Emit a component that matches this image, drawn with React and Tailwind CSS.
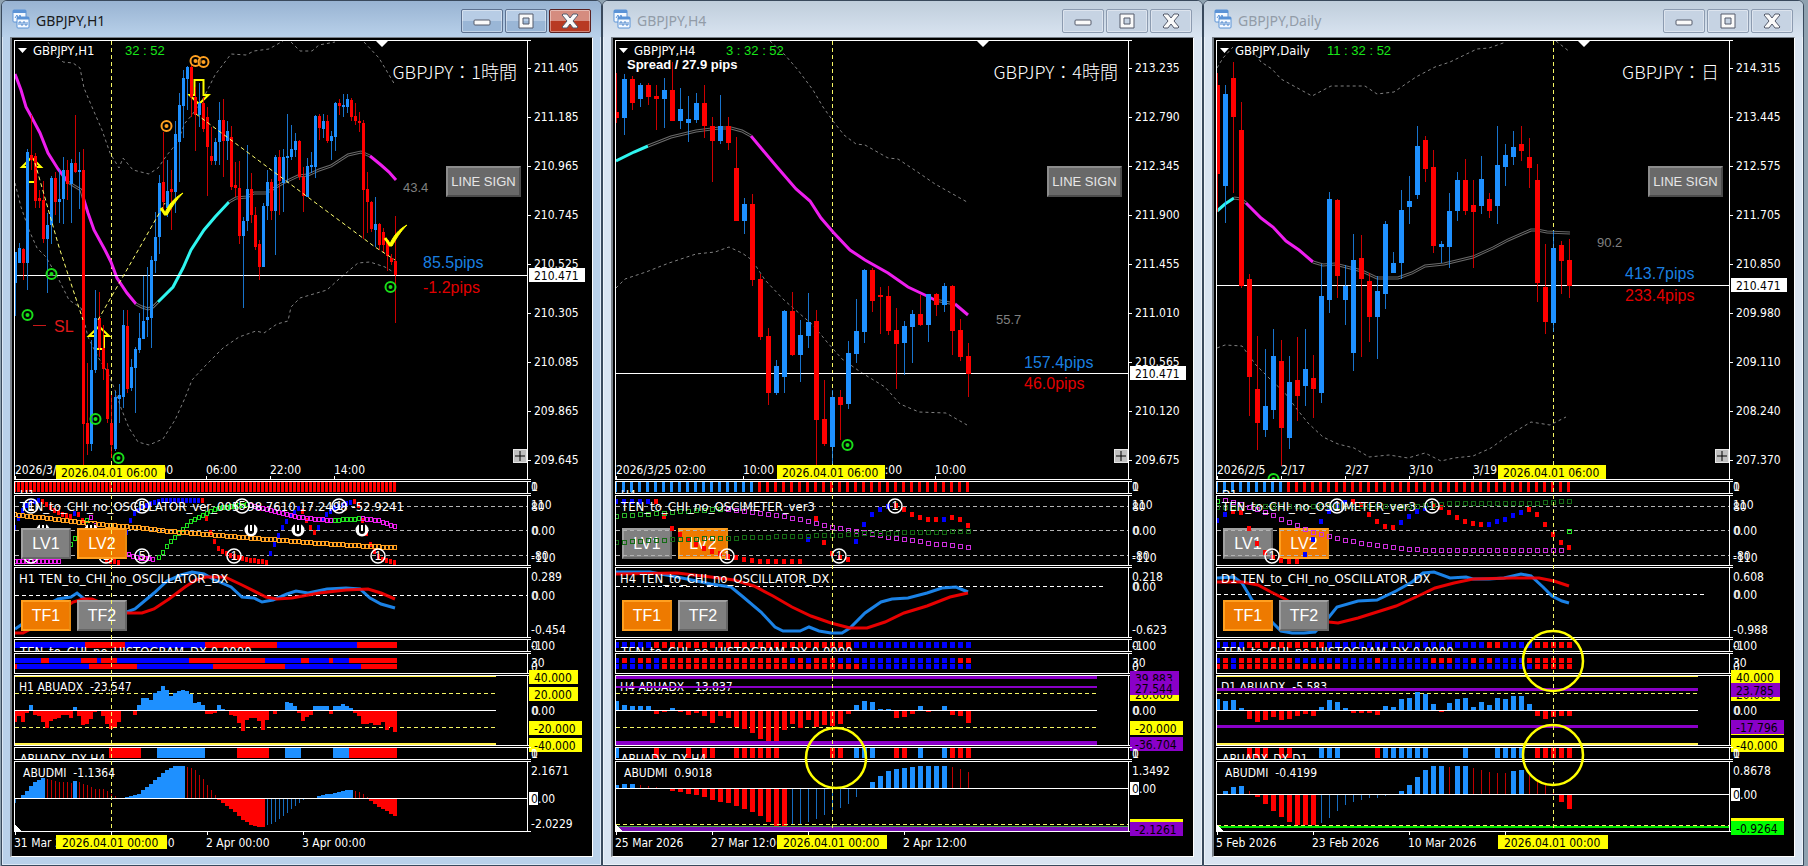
import React from 'react';
import { clsx } from 'clsx';

const BLUE = '#1e90ff';
const RED = '#ff0000';
const PURE_BLUE = '#0000ff';
const MAGENTA = '#ee1eee';
const CYAN = '#2ff5f0';
const GRAY = '#696969';
const PURPLE = '#8a00c8';
const YELLOW = '#ffff00';
const DASH_YELLOW = '#f5f564';

const SANS = 'font-["DejaVu_Sans_Condensed","Noto_Sans",sans-serif]';
const ARIAL = 'font-["Liberation_Sans",sans-serif]';

// body top, body bottom, high, low, direction
const CANDLES_H1 = `252,283,252,316,b 248,263,243,263,b 249,263,248,280,r 152,263,149,290,b 155,160,115,170,r 156,201,153,208,r 198,201,190,208,r 200,239,181,243,r
225,239,213,293,b 178,225,176,244,b 178,202,172,215,r 199,202,169,223,b 170,199,157,224,b 170,184,160,200,r 163,184,159,223,b 163,172,115,173,r
170,172,152,209,b 170,424,149,467,r 423,444,363,455,r 370,444,340,451,b 318,370,290,373,b 318,348,292,357,r 348,369,325,380,r 369,419,363,423,r
423,445,395,458,r 397,449,391,451,b 395,399,384,423,b 325,397,310,408,b 326,389,310,393,r 367,388,359,391,b 349,368,347,413,b 338,350,313,353,b
321,339,276,339,b 317,320,267,337,b 260,318,256,348,b 237,261,212,273,b 183,237,175,254,b 182,202,132,213,r 191,208,160,217,b 189,192,170,230,r
134,192,121,213,b 105,142,93,182,b 78,106,70,138,b 67,79,66,110,b 67,97,63,117,r 97,115,87,151,r 103,115,83,127,b 103,129,97,132,r
117,147,107,196,r 156,161,127,165,r 142,161,138,165,b 120,142,102,165,b 120,141,99,177,r 131,141,121,160,b 137,187,126,190,r 185,188,162,197,r
188,236,161,244,r 221,236,217,308,b 189,221,145,231,b 189,215,173,223,r 215,247,207,250,r 244,267,240,280,r 206,267,203,267,b 182,206,170,220,b
182,211,179,220,r 157,211,155,255,b 157,181,150,215,r 157,183,149,212,b 156,158,114,183,b 149,157,125,160,b 141,150,133,157,b 141,177,140,180,r
177,196,167,212,r 166,197,158,197,b 165,167,152,173,b 116,167,115,178,b 116,128,114,140,r 121,129,114,138,b 121,141,115,143,r 136,141,131,160,b
103,137,102,151,b 103,106,99,115,r 105,107,94,117,b 99,107,94,113,b 100,117,98,121,r 116,121,103,125,r 121,123,112,132,r 123,190,120,239,r
189,202,172,233,r 202,229,201,232,r 224,230,197,247,b 224,245,223,250,r 232,245,228,252,r 240,256,240,271,r 258,262,254,265,r 261,275,216,323,r`;

const CANDLES_H4 = `112,118,73,123,r 79,118,74,135,b 79,103,76,110,r 85,99,83,107,b 85,97,83,105,r 96,99,85,130,r 90,99,78,128,b 90,121,62,121,r 109,121,88,129,b
119,123,96,142,b 103,120,93,123,b 103,126,85,138,r 126,141,117,182,r 126,141,95,144,b 126,143,117,150,r 168,221,137,221,r 204,221,198,234,b 204,280,194,286,r
279,337,274,340,r 336,393,328,405,r 366,393,360,395,b 311,377,310,393,b 311,355,292,356,r 335,355,320,382,b 322,336,293,348,b 321,420,310,465,r 419,444,380,446,r
397,447,390,464,b 397,405,390,440,r 353,404,341,409,b 331,354,299,363,b 270,332,269,343,b 270,301,268,312,r 295,297,287,334,r 296,331,286,335,r 330,344,308,389,r
326,343,321,375,b 314,327,310,363,b 314,325,295,326,r 294,325,294,342,b 294,305,293,316,r 286,305,283,312,b 286,331,285,355,r 330,357,319,361,r 356,374,343,397,r`;

const CANDLES_D1 = `85,174,73,212,r 94,186,85,223,b 78,117,62,193,r 130,286,102,288,r 279,377,274,416,r 389,423,336,450,r 406,430,349,437,b 356,410,329,419,b 361,428,340,466,r
382,438,356,449,b 380,396,337,421,r 369,386,329,406,b 378,389,355,418,r 296,393,264,403,b 199,300,192,313,b 200,276,199,298,r 286,300,265,325,b 260,353,234,371,b
258,279,235,357,r 281,317,273,342,r 291,317,276,359,b 224,294,221,309,b 263,273,252,273,b 210,263,190,279,b 201,207,176,224,b 146,195,126,199,b 140,169,136,182,r
167,246,150,253,r 244,247,241,263,b 211,247,193,268,b 180,211,172,221,b 180,211,159,215,r 205,212,180,268,r 179,206,156,214,b 199,211,193,218,r 165,206,126,224,b
155,167,144,186,b 147,157,131,165,b 144,151,126,161,r 157,168,138,188,r 180,283,164,302,r 287,322,244,334,r 248,323,231,332,b 245,261,241,294,r 260,286,239,298,r`;

const CHARTS = [
    {
        id: 'h1',
        symbol: 'GBPJPY,H1',
        active: true,
        clock: '32 : 52',
        title: 'GBPJPY：1時間',
        step: 4,
        cursor: 97,
        price: 275,
        prices: ['211.405', '211.185', '210.965', '210.745', '210.525', '210.305', '210.085', '209.865', '209.645'],
        candles: CANDLES_H1,
        strength: { x: 389, y: 192, text: '43.4' },
        pips: [
            { y: 268, text: '85.5pips', color: BLUE },
            { y: 293, text: '-1.2pips', color: RED },
        ],
        average: [
            [MAGENTA, '1,74 7,90 12,107 17,116 26,133 34,153 44,169 54,182'],
            [GRAY, '54,182 62,187 67,190 69,197'],
            [MAGENTA, '69,197 74,213 80,230 91,250 97,262 103,278 113,293 122,304'],
            [GRAY, '122,304 128,307 134,309 139,307 144,302'],
            [CYAN, '144,302 159,287 169,268 177,250 190,230 201,217 215,202'],
            [GRAY, '215,202 222,198 233,197 240,193 252,193 269,183 284,176 294,175 305,170 317,166 334,155 347,152 356,156'],
            [MAGENTA, '356,156 367,165 375,172 382,180'],
        ],
        bands: [
            '34,42 44,57 49,62 59,63 66,68 70,88 78,107 88,130 96,153 105,168 109,158 119,170 135,174 144,168 153,155 163,143 171,123 178,115 190,97 201,75 217,54 232,55 240,51 255,49 269,41',
            '277,42 286,51 298,51 305,45 321,42',
            '350,42 365,58 381,85',
            '1,183 7,207 15,230 23,248 32,257 44,278 55,300 67,308 74,337 84,357 94,373 101,390 107,408 115,428 124,442 135,445 149,439 161,420 171,398 178,380 192,365 209,348 225,337 242,331 250,333 263,324 274,321 277,307 286,298 313,290 325,279 344,263 356,262 371,267 381,273',
        ],
        trends: ['21,163 45,247 69,320', '84,320 130,240 151,203', '182,114 361,247 381,260'],
        targets: [
            [152, 126, '#ffa020'], [181, 61, '#ffa020'], [189, 62, '#ffa020'],
            [37, 274, '#19dd19'], [13, 315, '#19dd19'], [81, 419, '#19dd19'], [104, 458, '#19dd19'], [376, 287, '#19dd19'],
        ],
        dates: [[1, '2026/3/31'], [128, '14:00'], [192, '06:00'], [256, '22:00'], [320, '14:00']],
        dateBox: [42, 109],
        footDates: [[0, '31 Mar 2026'], [97, '1 Apr 00:00'], [192, '2 Apr 00:00'], [288, '3 Apr 00:00']],
        footBox: [42, 111],
        tag: 'H1',
        signal: 'R96',
        oscName: 'TEN_to_CHI_no_OSCILLATOR_ver_005 -98.7610 17.2498 -52.9241',
        hollow: [
            ['#ee1eee', '1,561 45,561'],
            ['#1ee01e', '57,544 61,538 65,530 68,523 73,520'],
            ['#ee1eee', '77,517 81,525'],
            ['#ee1eee', '115,554 122,557 142,559'],
            ['#1ee01e', '145,557 157,541 167,531 178,520 194,512 205,508 234,504'],
            ['#ee1eee', '237,505 252,509 267,513 284,517 305,519 317,520'],
            ['#1ee01e', '321,520 349,518'],
            ['#ee1eee', '349,518 365,520 381,526'],
            ['#ffa020', '1,514 25,517 44,519 67,522 97,525 121,527 155,531 194,534 217,536 255,539 294,542 321,544 355,546 381,547'],
        ],
        solid: [
            [PURE_BLUE, '1,527 5,518 9,510 15,503 25,500'],
            [RED, '29,501 36,506 44,512 57,516'],
            [PURE_BLUE, '61,513 62,513'],
            [RED, '65,514 69,520 73,530'],
            [RED, '93,560 105,562'],
            [PURE_BLUE, '113,532 117,520 121,513 129,506 140,502 151,500 186,500'],
            [RED, '189,500 193,518 197,532 201,541 205,548 209,551 217,555 228,558 240,560 254,562'],
            [PURE_BLUE, '257,553 261,544 265,535 269,527 273,521 277,515 285,508'],
            [RED, '289,511 293,520 297,527 301,532'],
            [PURE_BLUE, '305,527 309,519 313,514 321,507 337,502'],
            [RED, '341,501 345,505 349,520 353,533 357,544 363,555 371,560 382,562'],
        ],
        marks: [[17, 506, 1], [128, 506, 5], [228, 506, 5], [325, 506, 1], [17, 556, 5], [92, 556, 1], [128, 556, 5], [220, 556, 1], [364, 556, 1]],
        plugs: [29, 77, 237, 284, 348],
        dxZero: 595,
        dxEnd: 513,
        dxAxis: ['0.289', '-0.454'],
        dx: [
            [BLUE, '1,629 7,625 26,608 44,599 57,597 63,593 69,598 90,610 113,612 121,609 140,593 153,581 167,575 178,572 190,574 201,580 217,587 228,597 240,598 248,602 259,600 273,594 282,591 294,593 313,589 332,588 346,589 356,598 367,604 381,608'],
            [RED, '1,633 9,633 30,622 59,602 69,599 78,599 100,608 113,613 128,613 140,609 155,599 171,587 182,580 192,577 211,577 228,585 252,597 263,599 278,598 305,593 332,590 354,589 367,593 381,599'],
        ],
        histogram: 'B18 R10 B20 R18 B20 R10',
        rows: ['B7 R2 B8 R4 B1 R4 B18 R19 B9 R2 B5 R1 B4 R12', 'R1 B18 R12 B19 R18 B19 R9'],
        adxName: 'H1 ABUADX  -23.547',
        adx: [-11, -5, -11, -2, 6, -4, -5, -11, -17, -10, -8, -7, -4, -4, -7, 4, -5, -14, -13, -8, -1, 0, -5, -13, -18, -16, -11, 0, 0, 0, -4, 6, 13, 13, 11, 18, 20, 25, 21, 15, 18, 20, 21, 20, 17, 8, 9, 6, -3, -3, -2, 6, 2, 1, -4, -5, -12, -20, -9, -7, -7, -10, -19, -9, 1, -3, 1, 1, 9, 8, 5, -2, -10, -6, -4, 5, 5, 5, 5, -3, 5, 5, 7, 5, 3, -2, -5, -13, -13, -12, -14, -14, -11, -19, -16, -21],
        adxLines: [[676, 2, '#fff04a'], [744, 2, '#fff04a']],
        adxBoxes: [[677, '40.000', YELLOW], [694, '20.000', YELLOW], [728, '-20.000', YELLOW], [745, '-40.000', YELLOW]],
        adxDx: 'ABUADX_DX H4',
        adxSignal: 'N24 R8 N4 B12 N8 R8 N4 B4 N8 B4 R12',
        dmiName: 'ABUDMI  -1.1364',
        dmiZero: 798,
        dmi: [-5, 0, 3, 7, 12, 16, 18, 20, 19, 18, 17, 16, 16, 16, 15, 17, 16, 14, 13, 11, 9, 9, 9, 7, 4, 2, 0, 0, 1, 2, 3, 4, 8, 11, 14, 18, 21, 25, 28, 30, 32, 32, 32, 31, 30, 28, 23, 19, 13, 8, 3, -2, -5, -8, -11, -14, -18, -22, -24, -27, -28, -29, -29, -27, -26, -24, -21, -18, -15, -11, -8, -5, -2, -1, -1, 0, 2, 3, 4, 4, 5, 6, 7, 8, 8, 7, 6, 4, 1, -3, -6, -9, -11, -13, -16, -18],
        dmiAxis: [[771, '2.1671'], [824, '-2.0229']],
        rings: [],
    },
    {
        id: 'h4',
        symbol: 'GBPJPY,H4',
        clock: '3 : 32 : 52',
        title: 'GBPJPY：4時間',
        spread: 'Spread / 27.9 pips',
        step: 8,
        cursor: 217,
        price: 373,
        prices: ['213.235', '212.790', '212.345', '211.900', '211.455', '211.010', '210.565', '210.120', '209.675'],
        candles: CANDLES_H4,
        strength: { x: 381, y: 324, text: '55.7' },
        pips: [
            { y: 368, text: '157.4pips', color: BLUE },
            { y: 389, text: '46.0pips', color: RED },
        ],
        average: [
            [CYAN, '1,161 19,152 33,146'],
            [GRAY, '33,146 56,137 81,131 104,128 116,128 127,131 136,136'],
            [MAGENTA, '136,136 146,148 162,167 181,189 195,201 206,218 218,232 235,250 250,260 273,273 293,287 312,296 320,300'],
            [GRAY, '320,300 340,304'],
            [MAGENTA, '340,304 353,315'],
        ],
        bands: [
            '155,41 170,55 183,70 198,90 208,107 218,121 229,135 241,144 250,145 273,158 283,159 304,173 320,184 352,202',
            '1,288 10,279 31,272 54,263 81,254 100,252 114,247 127,253 137,260 150,280 169,300 185,314 198,325 212,342 227,359 247,373 270,387 285,404 304,412 331,413 352,425',
        ],
        trends: [],
        targets: [[232, 445, '#19dd19']],
        dates: [[1, '2026/3/25 02:00'], [128, '10:00'], [256, '18:00'], [320, '10:00']],
        dateBox: [162, 108],
        footDates: [[0, '25 Mar 2026'], [96, '27 Mar 12:00'], [288, '2 Apr 12:00']],
        footBox: [162, 110],
        tag: 'H4',
        signal: 'B18 R27',
        oscName: 'TEN_to_CHI_no_OSCIMETER_ver3',
        hollow: [
            ['#2bb52b', '1,516 56,512 81,510 105,509'],
            ['#d030e0', '113,509 139,512 169,516 193,521 217,527 248,532 281,538 316,543 353,547'],
            ['#146b14', '1,542 62,539 112,538 177,536 216,535 254,533 312,532 353,531'],
        ],
        solid: [
            [PURE_BLUE, '1,501 33,501'],
            [RED, '41,501 49,516 57,528 65,534 73,539 81,544 89,548 97,551 105,553 113,556 121,557 129,559 137,560 145,561 185,561'],
            [PURE_BLUE, '193,539 194,539'],
            [RED, '201,518 209,542 217,553 225,557 233,559'],
            [PURE_BLUE, '241,541 249,524 257,514 265,509 273,506'],
            [RED, '281,505 289,509 297,514 305,517 313,519 321,519'],
            [PURE_BLUE, '329,519 330,519'],
            [RED, '337,517 345,519 353,525'],
        ],
        marks: [[112, 556, 1], [224, 556, 1], [280, 506, 1]],
        plugs: [],
        dxZero: 586,
        dxEnd: 491,
        dxAxis: ['0.218', '-0.623'],
        dx: [
            [BLUE, '1,572 35,572 62,577 96,584 116,587 127,596 146,612 160,627 168,631 185,631 194,627 204,631 216,633 227,633 235,628 250,613 266,602 277,599 293,598 312,593 327,588 341,587 353,592'],
            [RED, '1,574 62,573 96,577 119,580 139,586 158,596 177,607 196,616 216,623 235,628 252,628 270,622 289,613 312,606 335,597 353,593'],
        ],
        histogram: 'B5 R25 B15',
        rows: ['B1 R1 B1 R2 B1 R16 B1 R1 B1 R3 B15 R2', 'B6 R25 B14'],
        adxName: 'H4 ABUADX  -13.837',
        adx: [10, 6, 5, 5, 5, -3, -1, 3, -1, -4, -2, -5, -12, -5, -7, -16, -18, -22, -28, -30, -30, -19, -13, -17, -9, -16, -14, -15, -13, -3, 6, 10, 9, 2, 2, -7, -6, -3, 5, -1, 0, 5, -4, -5, -12],
        adxLines: [[677, 3, PURPLE], [687, 2, PURPLE], [743, 5, PURPLE]],
        adxBoxes: [[694, '20.000', YELLOW], [678, '39.883', PURPLE], [688, '27.544', PURPLE], [728, '-20.000', YELLOW], [744, '-36.704', PURPLE]],
        adxDx: 'ABUADX_DX H4',
        adxSignal: 'B1 N4 R1 N3 R1 N1 R2 N2 R6 N6 R2 N1 B3 N2 R2 N1 B1 N2 B1 R3',
        dmiName: 'ABUDMI  0.9018',
        dmiZero: 788,
        dmi: [3, 4, 4, 3, 2, 1, 0, -3, -4, -6, -7, -9, -12, -14, -15, -18, -21, -24, -28, -34, -38, -38, -37, -36, -34, -31, -27, -23, -20, -16, -9, -1, 6, 12, 17, 19, 20, 21, 22, 22, 22, 22, 21, 19, 16],
        dmiFloor: { dash: 824, line: [828, 4, '#7b12b5'], edge: 826, box: [829, '-2.1261', PURPLE] },
        dmiAxis: [[771, '1.3492']],
        rings: [[221, 758]],
    },
    {
        id: 'd1',
        symbol: 'GBPJPY,Daily',
        clock: '11 : 32 : 52',
        title: 'GBPJPY：日',
        step: 8,
        cursor: 337,
        price: 285,
        prices: ['214.315', '213.445', '212.575', '211.705', '210.850', '209.980', '209.110', '208.240', '207.370'],
        candles: CANDLES_D1,
        strength: { x: 381, y: 247, text: '90.2' },
        pips: [
            { y: 279, text: '413.7pips', color: BLUE },
            { y: 301, text: '233.4pips', color: RED },
        ],
        average: [
            [CYAN, '1,211 9,204 18,198'],
            [GRAY, '18,198 25,199 30,203'],
            [MAGENTA, '30,203 45,218 57,227 70,241 83,250 97,262'],
            [GRAY, '97,262 107,265 119,264 146,271 161,278 182,278 196,273 209,266 228,264 257,257 277,248 292,240 315,230 321,230 331,232 354,233'],
        ],
        bands: [
            '1,68 7,58 17,47',
            '36,50 45,62 56,69 65,79 96,96 115,86 149,86 161,94 178,92 200,77 219,67 234,62 261,49 273,48 290,42',
            '340,41 354,52',
            '1,348 9,345 26,346 40,365 53,378 69,393 80,408 92,423 107,437 122,444 138,448 153,457 173,455 192,458 209,453 225,461 238,458 257,456 275,448 290,437 315,422 334,425 350,417',
        ],
        trends: [],
        targets: [[57, 479, '#19dd19']],
        dates: [[1, '2026/2/5'], [65, '2/17'], [129, '2/27'], [193, '3/10'], [257, '3/19']],
        dateBox: [282, 108],
        footDates: [[0, '5 Feb 2026'], [96, '23 Feb 2026'], [192, '10 Mar 2026']],
        footBox: [282, 110],
        tag: 'D1',
        signal: 'B9 R36',
        oscName: 'TEN_to_CHI_no_OSCIMETER_ver3',
        hollow: [
            ['#1ee01e', '1,501 2,501'],
            ['#146b14', '1,507 80,506 203,506 234,503 319,503 353,501'],
            ['#d030e0', '9,500 24,504 40,509 56,515 80,525 96,532 120,538 136,541 153,544 176,547 192,549 225,550 345,550'],
            ['#1ee01e', '353,531 354,531'],
        ],
        solid: [
            [PURE_BLUE, '1,520 9,514'],
            [RED, '17,511 25,512 33,528 41,543 49,552 57,557 65,560 73,561 81,561'],
            [PURE_BLUE, '89,554 97,539 105,521 113,511 121,505 129,502'],
            [RED, '137,501 145,504 153,514 161,521 169,526 177,527'],
            [PURE_BLUE, '185,522 193,516 201,511 209,508'],
            [RED, '217,505 225,507 233,512 241,517 249,521 257,523 265,524'],
            [PURE_BLUE, '273,524 281,521 289,519 297,515 305,512'],
            [RED, '313,509 321,514 329,524 337,534 345,542 353,547'],
        ],
        marks: [[56, 556, 1], [121, 506, 1], [216, 506, 1]],
        plugs: [],
        dxZero: 594,
        dxEnd: 491,
        dxAxis: ['0.608', '-0.988'],
        dx: [
            [BLUE, '1,578 18,577 26,583 32,593 36,600 57,623 65,631 76,633 88,633 99,632 113,617 121,607 142,601 161,600 180,591 196,582 207,573 218,572 234,578 250,577 257,579 273,579 288,578 305,574 315,576 327,587 336,596 346,601 353,603'],
            [RED, '1,582 26,582 42,585 55,592 69,599 90,612 113,622 122,623 142,618 161,612 180,606 200,597 219,588 238,583 257,579 296,578 323,578 338,581 353,586'],
        ],
        histogram: 'B4 R10 B20 R2 B4 R5',
        rows: ['B1 R1 B1 R7 B10 R1 B6 R3 B2 R1 B1 R1 B4 R6', 'R2 B1 R13 B24 R5'],
        adxName: 'D1 ABUADX  -5.583',
        adx: [12, 10, 11, 3, -8, -11, -9, -6, -9, -8, -5, -3, -5, 4, 11, 9, 3, -2, -2, -2, -4, 5, 4, 12, 13, 19, 17, 7, -1, 8, 12, 13, 4, 9, 6, 13, 12, 15, 15, 7, -5, -8, -6, -5, -5],
        adxLines: [[676, 2, '#fff04a'], [689, 3, PURPLE], [726, 3, PURPLE], [744, 2, '#fff04a']],
        adxBoxes: [[677, '40.000', YELLOW], [694, '20.000', YELLOW], [690, '23.785', PURPLE], [728, '-20.000', YELLOW], [727, '-17.796', PURPLE], [745, '-40.000', YELLOW]],
        adxDx: 'ABUADX_DX D1',
        adxSignal: 'N4 R3 N1 R2 N3 B3 N4 R1 B6 N4 B1 N3 B4 N1 R5',
        dmiName: 'ABUDMI  -0.4199',
        dmiZero: 794,
        dmi: [0, 3, 7, 8, 3, -3, -10, -17, -23, -28, -31, -31, -31, -29, -24, -17, -11, -8, -6, -4, -4, -2, 0, 3, 9, 17, 24, 28, 28, 27, 28, 28, 26, 24, 22, 21, 21, 23, 24, 22, 15, 9, 4, -8, -15],
        dmiFloor: { dash: 825, line: [827, 2, '#00e600'], box: [828, '-0.9264', '#00ff00'] },
        dmiAxis: [[771, '0.8678']],
        rings: [[337, 661], [337, 755]],
    },
];

const toPoints = (s) => s.split(' ').map((p) => p.split(',').map(Number));

// samples a polyline at every bar
const sample = (s, step) => {
    const pts = toPoints(s);
    const out = [];
    for (let x = pts[0][0]; x <= pts[pts.length - 1][0]; x += step) {
        const n = Math.max(1, pts.findIndex((p) => p[0] >= x));
        const [x0, y0] = pts[n - 1];
        const [x1, y1] = pts[n];
        out.push([x, Math.round(y0 + ((y1 - y0) * (x - x0)) / (x1 - x0))]);
    }
    return out;
};

// 'B18 R27' -> one letter for each bar
const expand = (s) => s.split(' ').flatMap((r) => Array(Number(r.slice(1))).fill(r[0]));

const barBox = (i, step) => (step === 4 ? { x: 4 * i - 1, width: 4 } : { x: 8 * i - 1, width: 5 });

const Label = ({ x, y, children, className = 'fill-white', large }) => (
    <text x={x} y={y} className={clsx('whitespace-pre', large ? 'text-[13px]' : 'text-[12px]', SANS, className)}>{children}</text>
);

const Panel = ({ top, height, className, chart, axis, under, over }) => (
    <div className={clsx('flex', className)}>
        <div className="relative min-w-0 flex-1 border border-white">
            {under}
            <svg className="pointer-events-none absolute inset-0 block h-full w-full overflow-hidden" aria-hidden="true">
                <g transform={`translate(-1 ${-top - 1})`}>{chart}</g>
            </svg>
            {over}
        </div>
        <svg className="relative block w-16 shrink-0 overflow-visible" height={height}>
            <path d={`M0 .5h3M0 ${height - 0.5}h3`} stroke="white" />
            <g transform={`translate(0 ${-top})`}>{axis}</g>
        </svg>
    </div>
);

const Strip = ({ runs, step, y, height, solid = PURE_BLUE, gap = 0 }) => (
    <g shapeRendering="crispEdges">
        {expand(runs).map((k, i) => {
            if (k === 'N') return null;
            const box = barBox(i, step);
            return <rect key={i} x={box.x} y={y} width={box.width - gap} height={height} fill={k === 'R' ? RED : solid} />;
        })}
    </g>
);

const AxisBox = ({ y, text, color }) => (
    <g>
        <rect x="1" y={y - 7} width={text[0] === '-' ? 53 : 49} height="14" fill={color} />
        <Label x={6} y={y + 5} className="fill-black">{text}</Label>
    </g>
);

const Target = ({ x, y, color }) => (
    <g>
        <circle cx={x + 0.5} cy={y} r="5" fill="black" fillOpacity="0.4" stroke={color} strokeWidth="2" />
        <circle cx={x + 0.5} cy={y} r="2" fill={color} />
    </g>
);

const Dash = ({ y, end = 513, color = 'white', dash = '4 3' }) => (
    <line x1="1" x2={end} y1={y + 0.5} y2={y + 0.5} stroke={color} strokeDasharray={dash} shapeRendering="crispEdges" />
);

const PriceChart = ({ c }) => (
    <>
        <line x1={c.cursor + 0.5} x2={c.cursor + 0.5} y1="41" y2="465" stroke={DASH_YELLOW} strokeDasharray="4 3" />
        {c.bands.map((b) => <polyline key={b} points={b} fill="none" stroke="#808080" strokeDasharray="3 3" />)}
        {c.id === 'h1' && (
            <path d="M13 182h8M14 167h-6l9.500-9.500 9.500 9.500h-5M81 349h9v-13h5l-10-9.500-10 9.500h5M180.500 95v-15h9v15h5l-9.500 9-9.500-9z" fill="none" stroke={YELLOW} strokeWidth="2" />
        )}
        {c.average.map(([color, pts]) => (
            <g key={pts} fill="none">
                <polyline points={pts} stroke={color} strokeWidth="3" />
                {color === GRAY && <polyline points={pts} stroke="black" strokeWidth="1" />}
            </g>
        ))}
        <rect x="1" y={c.price} width="100%" height="1" fill="white" />
        <g shapeRendering="crispEdges">
            {c.candles.split(/\s+/).map((row, i) => {
                const [top, bottom, high, low, dir] = row.split(',');
                const x = 1 + c.step * i;
                const half = c.step === 4 ? 1 : 2;
                return (
                    <g key={i} fill={dir === 'b' ? BLUE : RED}>
                        <rect x={x} y={high} width="1" height={low - high} opacity="0.8" />
                        <rect x={x - half} y={top} width={half * 2 + 1} height={Math.max(2, bottom - top)} />
                    </g>
                );
            })}
        </g>
        {c.trends.map((t) => <polyline key={t} points={t} fill="none" stroke="#ffff70" strokeDasharray="4 3" />)}
        {c.targets.map(([x, y, color]) => <Target key={`${x}-${y}`} x={x} y={y} color={color} />)}
        {c.id === 'h1' && (
            <g fill="none" stroke={YELLOW}>
                <path d="M147 208l4 6M371 238l5 7" strokeWidth="3" />
                <path d="M150 215c4-10 10-17 19-22-7 7-11 14-16 22zM375 246c4-10 10-17 18-21-7 7-11 14-15 21z" fill={YELLOW} strokeWidth="1" />
                <path d="M19 325.500h13" stroke="#c81919" strokeWidth="1" />
                <text x="40" y="332" className={clsx('text-base', ARIAL)} fill="#e01919" stroke="none">SL</text>
            </g>
        )}
        <path d="M4 48h9l-4.500 5zM362 41h12l-6 6z" fill="white" />
        <Label x={19} y={55} large>{c.symbol}</Label>
        <g className={ARIAL}>
            <text x="111" y="55" className="fill-[#19e619] text-[13px]">{c.clock}</text>
            {c.spread && <text x="12" y="69" className="fill-white text-[13px] font-bold">{c.spread}</text>}
            <text x={c.strength.x} y={c.strength.y} className="fill-[#808080] text-[13px]">{c.strength.text}</text>
            {c.pips.map((p) => <text key={p.text} x="409" y={p.y} className="text-base" fill={p.color} fillOpacity="0.9">{p.text}</text>)}
        </g>
        {c.dates.map(([x, t]) => <Label key={x} x={x} y={474}>{t}</Label>)}
        {c.dates.map(([x]) => <rect key={x} x={x} y="476" width="1" height="4" fill="white" />)}
        <rect x={c.dateBox[0]} y="465" width={c.dateBox[1]} height="14" fill={YELLOW} />
        <Label x={c.dateBox[0] + 5} y={477} className="fill-black">2026.04.01 06:00</Label>
    </>
);

const Oscillator = ({ c }) => {
    const w = c.step === 4 ? 4 : 5;
    return (
        <>
            {[506, 530, 555].map((y) => <Dash key={y} y={y} color="#b4b4b4" />)}
            <g shapeRendering="crispEdges">
                {c.solid.map(([color, s]) => sample(s, c.step).map(([x, y]) => (
                    <rect key={s + x} x={x - 2} y={y - 2} width={w - 1} height="5" fill={color} />
                )))}
                {c.hollow.map(([color, s]) => sample(s, c.step).map(([x, y]) => (
                    <rect key={s + x} x={x - 1.5} y={y - 1.5} width={w - 1} height="4" fill="none" stroke={color} />
                )))}
            </g>
            {c.plugs.map((x) => (
                <g key={x}>
                    <circle cx={x} cy="530" r="6.500" fill="white" />
                    <path d={`M${x - 3} 523v8a3 3 0 0 0 6 0v-8z`} fill="black" />
                    <rect x={x - 1} y="525" width="2" height="6" fill="white" />
                </g>
            ))}
            {c.marks.map(([x, y, n]) => (
                <g key={`${x}-${y}`}>
                    <circle cx={x} cy={y} r="7" fill="none" stroke="white" strokeWidth="1.5" />
                    <text x={x} y={y + 4} textAnchor="middle" className={clsx('fill-white text-[12px]', ARIAL)}>{n}</text>
                </g>
            ))}
            <Label x={6} y={511} large>{c.oscName}</Label>
        </>
    );
};

const Adx = ({ c }) => (
    <g shapeRendering="crispEdges">
        <Dash y={693} end={482} color={DASH_YELLOW} />
        <Dash y={727} end={482} color={DASH_YELLOW} />
        {c.adx.map((v, i) => (
            <rect key={i} {...barBox(i, c.step)} y={v > 0 ? 711 - v : 711} height={Math.abs(v)} fill={v > 0 ? BLUE : RED} />
        ))}
        <Label x={5} y={691}>{c.adxName}</Label>
        {c.adxLines.map(([y, h, color]) => <rect key={y} x="1" y={y - Math.floor(h / 2)} width="481" height={h} fill={color} />)}
        <rect x="1" y="710" width="481" height="1" fill="white" />
    </g>
);

const Dmi = ({ c }) => {
    let rising = false;
    return (
        <g shapeRendering="crispEdges">
            {c.dmi.map((v, i) => {
                const prev = i ? c.dmi[i - 1] : v > 0 ? 0 : -9;
                if (v !== prev) rising = v > prev;
                const wide = v >= 0 === rising;
                const box = wide ? barBox(i, c.step) : { x: 1 + c.step * i, width: 1 };
                return <rect key={i} {...box} y={v > 0 ? c.dmiZero - v : c.dmiZero} height={Math.abs(v)} fill={rising ? BLUE : RED} opacity={wide ? 1 : 0.75} />;
            })}
            <rect x="1" y={c.dmiZero} width="100%" height="1" fill="white" />
            <Label x={9} y={777}>{c.dmiName}</Label>
            {c.dmiFloor && (
                <>
                    <Dash y={c.dmiFloor.dash} end={513} color={DASH_YELLOW} />
                    <rect x="1" y={c.dmiFloor.line[0] - 1} width="100%" height={c.dmiFloor.line[1]} fill={c.dmiFloor.line[2]} />
                    {c.dmiFloor.edge && <rect x="1" y={c.dmiFloor.edge} width="100%" height="1" fill="#4ca64c" />}
                </>
            )}
            <path d="M1 825l6 6h-6z" fill="white" />
        </g>
    );
};

const ChartButton = ({ on, children }) => (
    <button
        type="button"
        className={clsx(
            'flex h-[31px] w-[50px] items-center justify-center border-2 text-base text-white',
            ARIAL,
            on ? 'border-[#ffa020] border-r-[#e88a10] border-b-[#ffa020] bg-[#ee7a00]' : 'border-[#a0a0a0] border-r-[#666] border-b-[#666] bg-[#808080]'
        )}
    >
        {children}
    </button>
);

const ButtonPair = ({ labels, active }) => (
    <div className="absolute top-8 left-1.5 flex gap-1.5">
        {labels.map((l) => <ChartButton key={l} on={l === active}>{l}</ChartButton>)}
    </div>
);

const AppIcon = () => (
    <svg className="h-5 w-[18px]" viewBox="0 0 18 20" aria-hidden="true">
        <rect x="1" y="1" width="13" height="12" rx="1" fill="#f4f9ff" stroke="#5b93d6" />
        <rect x="1" y="1" width="13" height="3" fill="#5b93d6" />
        <path d="M3 9l2-3 1 4 2-4 1 3" fill="none" stroke="#5b93d6" />
        <rect x="5" y="8" width="12" height="11" rx="1" fill="#f4f9ff" stroke="#5b93d6" />
        <rect x="5" y="8" width="12" height="2.500" fill="#5b93d6" />
        <path d="M7 16v-3h2v3h2v-3h2v3h2v-3" fill="none" stroke="#4c86cc" />
    </svg>
);

const captionIcons = {
    Minimize: <rect x="1" y="7" width="16" height="5" rx="1" />,
    Maximize: <path d="M2 1h14v14h-14zM6 5v6h6v-6z" fillRule="evenodd" />,
    Close: <path d="M2 1h4l3 4 3-4h4l1 1-5 6 5 6-1 1h-4l-3-4-3 4h-4l-1-1 5-6-5-6z" />,
};

const CaptionButton = ({ name, active }) => (
    <button
        type="button"
        aria-label={name}
        className={clsx(
            'flex h-6 w-[42px] items-center justify-center rounded-[2px] border shadow-[inset_0_0_0_1px_rgba(255,255,255,0.4)]',
            !active && 'border-[#8c9bb0] bg-[#c6d3e3]',
            active && name !== 'Close' && 'border-[#5d7190] bg-linear-to-b from-[#b7cce5] from-50% to-[#9ab6d6] to-50%',
            active && name === 'Close' && 'border-[#5a2020] bg-linear-to-b from-[#d58c7f] from-50% to-[#b83a23] to-50%'
        )}
    >
        <svg className="h-4 w-[18px] fill-[#fafafa] stroke-[#545a6b]" viewBox="0 0 18 16" aria-hidden="true">{captionIcons[name]}</svg>
    </button>
);

const ChartWindow = ({ c }) => {
    const oscButtons = <ButtonPair labels={['LV1', 'LV2']} active="LV2" />;
    const zero = <><Label x={3} y={535}>0.00</Label><Label x={4} y={535}>0</Label></>;

    return (
        <section
            className={clsx(
                'flex min-w-0 flex-col rounded-t-md border border-[#39495c] shadow-[inset_0_0_0_1px_rgba(255,255,255,0.5)]',
                c.active ? 'bg-[#b9d1ea]' : 'bg-[#d9e4f1]'
            )}
        >
            <header
                className={clsx(
                    'flex h-9 items-center rounded-t-[5px] pr-2.5 pl-[10px] bg-linear-to-b',
                    c.active ? 'from-[#98b3d2] to-[#b9d1ea]' : 'from-[#bfcddb] to-[#d9e4f1]'
                )}
            >
                <AppIcon />
                <h2 className={clsx('ml-1.5 flex-1 pt-1 font-["Noto_Sans",sans-serif] text-sm', c.active ? 'text-[#1a1a1a]' : 'text-[#929ca8]')}>{c.symbol}</h2>
                <div className="flex gap-0.5 pt-1">
                    {['Minimize', 'Maximize', 'Close'].map((n) => <CaptionButton key={n} name={n} active={c.active} />)}
                </div>
            </header>

            <div className="mr-2 mb-2 ml-2 flex flex-1 flex-col border-t border-r border-b border-l-2 border-t-[#777f88] border-r-white border-b-white border-l-[#777f88] bg-black pt-0.5 pl-0.5">
                <div className="relative flex flex-col gap-px">
                    <Panel
                        top={40}
                        height={440}
                        className="h-[440px]"
                        chart={<PriceChart c={c} />}
                        axis={
                            <>
                                {c.prices.map((p, i) => (
                                    <g key={p}>
                                        <rect x="0" y={68 + 49 * i} width="3" height="1" fill="white" />
                                        <Label x={6} y={72 + 49 * i}>{p}</Label>
                                    </g>
                                ))}
                                <rect x="1" y={c.price - 7} width="56" height="14" fill="white" />
                                <Label x={6} y={c.price + 5} className="fill-black">210.471</Label>
                            </>
                        }
                        over={
                            <>
                                <p className='absolute top-[18px] right-2.5 font-["Noto_Sans_CJK_JP",sans-serif] text-lg leading-6 font-light text-white'>{c.title}</p>
                                <button
                                    type="button"
                                    className={clsx('absolute top-[125px] right-1.5 h-[31px] w-[75px] border-2 border-[#8c8c8c] border-r-[#4c4c4c] border-b-[#4c4c4c] bg-[#696969] text-[13px] whitespace-nowrap text-[#e6e6e6]', ARIAL)}
                                >
                                    LINE SIGN
                                </button>
                                <button type="button" aria-label="Add" className="absolute right-0 bottom-4 h-3.5 w-3.5 border border-[#e6e6e6] bg-[#c0c0c0]">
                                    <svg viewBox="0 0 12 12" className="block h-3 w-3" stroke="black"><path d="M6 1v10M1 6h10" /></svg>
                                </button>
                            </>
                        }
                    />
                    <Panel
                        top={481}
                        height={13}
                        className="h-[13px]"
                        chart={<><Strip runs={c.signal} step={c.step} y={482} height={10} solid={BLUE} gap={c.step === 4 ? 1 : 2} /><Label x={6} y={499}>{c.tag}</Label></>}
                        axis={<><Label x={3} y={491}>1</Label><Label x={3} y={491}>0</Label></>}
                    />
                    <Panel
                        top={495}
                        height={71}
                        className="h-[71px]"
                        chart={<Oscillator c={c} />}
                        under={!c.active && oscButtons}
                        over={c.active && oscButtons}
                        axis={
                            <>
                                <Label x={3} y={509}>110</Label>
                                <Label x={3} y={511}>80</Label>
                                {zero}
                                <Label x={3} y={562}>-110</Label>
                                <Label x={3} y={560}>-80</Label>
                            </>
                        }
                    />
                    <Panel
                        top={567}
                        height={71}
                        className="h-[71px]"
                        chart={
                            <>
                                <Dash y={c.dxZero} end={c.dxEnd} />
                                {c.dx.map(([color, pts]) => <polyline key={color} points={pts} fill="none" stroke={color} strokeWidth="3" opacity="0.9" />)}
                                <Label x={5} y={583} large>{c.tag} TEN_to_CHI_no_OSCILLATOR_DX</Label>
                            </>
                        }
                        over={<ButtonPair labels={['TF1', 'TF2']} active="TF1" />}
                        axis={
                            <>
                                <Label x={3} y={581}>{c.dxAxis[0]}</Label>
                                <Label x={3} y={c.dxZero + 5}>0.00</Label>
                                <Label x={4} y={c.dxZero + 5}>0</Label>
                                <Label x={3} y={634}>{c.dxAxis[1]}</Label>
                            </>
                        }
                    />
                    <Panel
                        top={639}
                        height={13}
                        className="h-[13px]"
                        chart={<><Strip runs={c.histogram} step={c.step} y={642} height={6} /><Label x={6} y={656} large>TEN_to_CHI_no_HISTOGRAM_DX 0.0000</Label></>}
                        axis={<><Label x={3} y={650}>0.00</Label><Label x={3} y={650}>-1</Label></>}
                    />
                    <Panel
                        top={653}
                        height={21}
                        className="h-[21px]"
                        chart={c.rows.map((r, i) => <Strip key={r} runs={r} step={c.step} y={658 + 6 * i} height={5} />)}
                        axis={<><Label x={3} y={667}>30</Label><Label x={3} y={671}>0</Label></>}
                    />
                    <Panel
                        top={675}
                        height={71}
                        className="h-[71px]"
                        chart={<Adx c={c} />}
                        axis={
                            <>
                                <Label x={3} y={715}>0.00</Label>
                                <Label x={4} y={715}>0</Label>
                                {c.adxBoxes.map(([y, text, color]) => <AxisBox key={text} y={y} text={text} color={color} />)}
                            </>
                        }
                    />
                    <Panel
                        top={747}
                        height={13}
                        className="h-[13px]"
                        chart={<><Strip runs={c.adxSignal} step={c.step} y={748} height={10} solid={BLUE} /><Label x={6} y={763}>{c.adxDx}</Label></>}
                        axis={<><Label x={3} y={758}>1</Label><Label x={3} y={758}>0</Label></>}
                    />
                    <Panel
                        top={761}
                        height={71}
                        className="h-[71px]"
                        chart={<Dmi c={c} />}
                        axis={
                            <>
                                {c.dmiAxis.map(([y, t]) => <Label key={t} x={3} y={y + 4}>{t}</Label>)}
                                <rect x="1" y={c.dmiZero - 6} width="9" height="13" fill="white" />
                                <Label x={3} y={c.dmiZero + 5} className="fill-black">0</Label>
                                <Label x={10} y={c.dmiZero + 5}>.00</Label>
                                {c.dmiFloor && (
                                    <>
                                        <rect x="1" y={c.dmiFloor.box[0] - 10} width="53" height="6" fill={YELLOW} />
                                        <AxisBox y={c.dmiFloor.box[0]} text={c.dmiFloor.box[1]} color={c.dmiFloor.box[2]} />
                                    </>
                                )}
                            </>
                        }
                    />

                    <svg className="pointer-events-none absolute inset-0 h-full w-full" aria-hidden="true">
                        <g transform="translate(0 -40)" fill="none">
                            <line x1={c.cursor + 0.5} x2={c.cursor + 0.5} y1="481" y2="831" stroke={DASH_YELLOW} strokeDasharray="4 3" />
                            {c.rings.map(([x, y]) => <circle key={y} cx={x} cy={y} r="30" stroke={YELLOW} strokeWidth="2.500" />)}
                        </g>
                    </svg>
                </div>

                <svg className="block h-[23px] w-full" role="img" aria-label="Dates">
                    {[1, 97, 193, 289].map((x) => <rect key={x} x={x} y="0" width="1" height="3" fill="white" />)}
                    {c.footDates.map(([x, t]) => <Label key={x} x={x} y={15}>{t}</Label>)}
                    <rect x={c.footBox[0]} y="3" width={c.footBox[1]} height="14" fill={YELLOW} />
                    <Label x={c.footBox[0] + 6} y={15} className="fill-black">2026.04.01 00:00</Label>
                </svg>
            </div>
        </section>
    );
};

const App = () => (
    <main className="grid min-h-screen grid-cols-3 bg-[#8fa2b0] pr-1 pl-px">
        {CHARTS.map((c) => <ChartWindow key={c.id} c={c} />)}
    </main>
);

export default App;
